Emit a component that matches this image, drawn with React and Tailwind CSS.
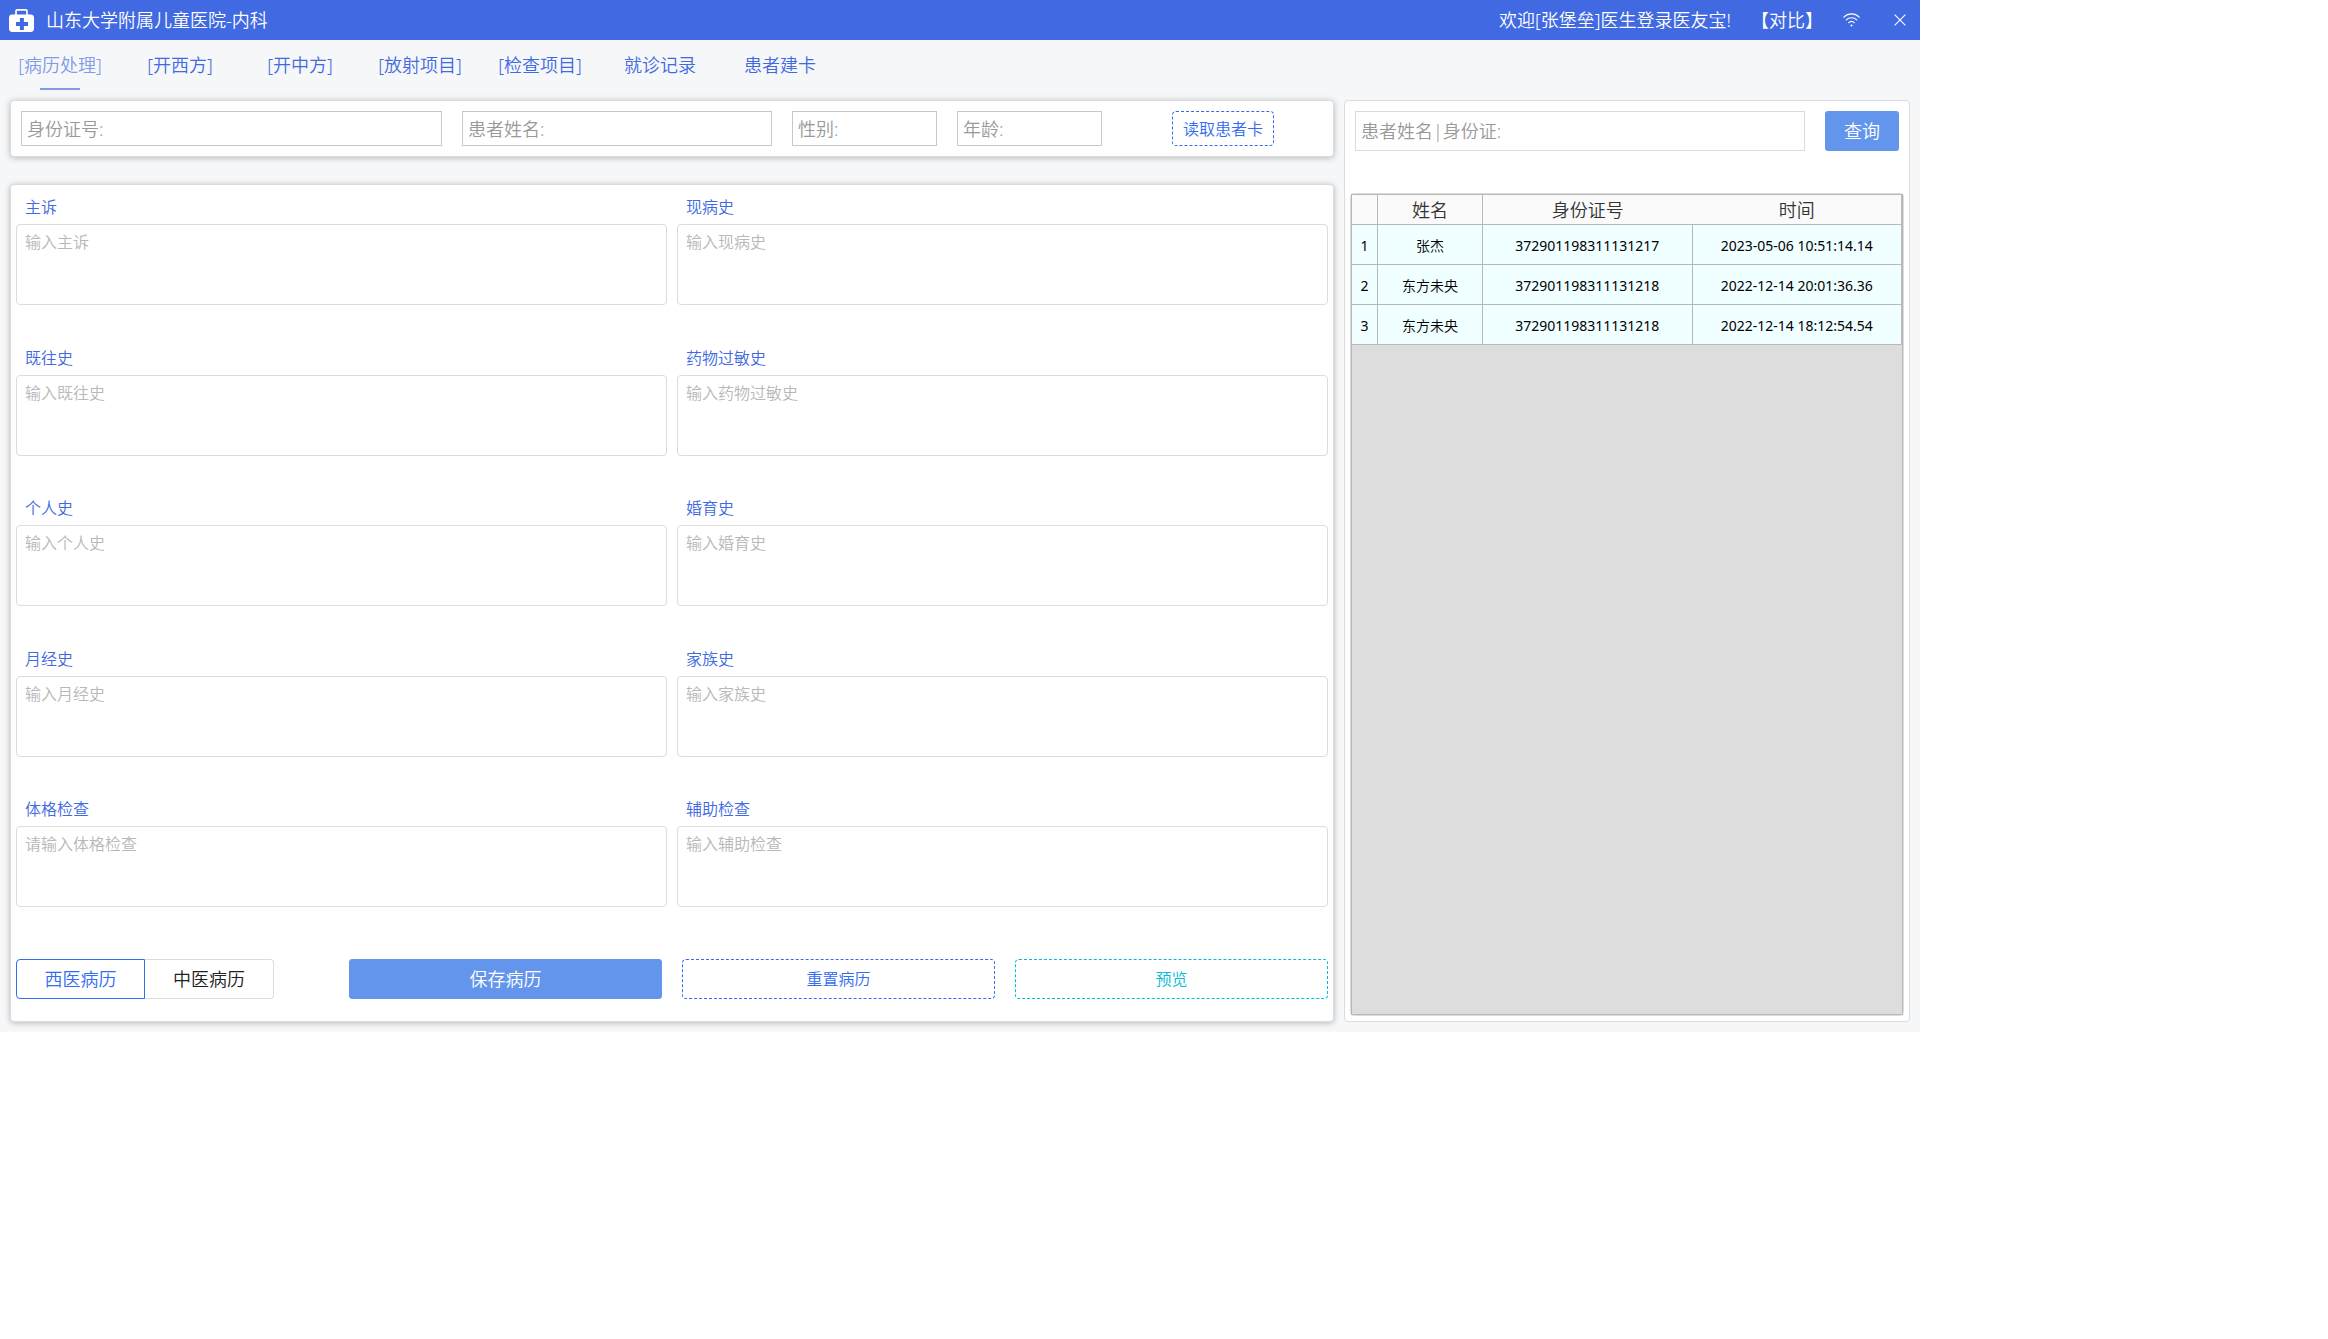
import { useState } from 'react'

const TABS = [
  '[病历处理]',
  '[开西方]',
  '[开中方]',
  '[放射项目]',
  '[检查项目]',
  '就诊记录',
  '患者建卡',
]

const RECORD_FIELDS = [
  { id: 'complaint', label: '主诉', hint: '输入主诉' },
  { id: 'present', label: '现病史', hint: '输入现病史' },
  { id: 'past', label: '既往史', hint: '输入既往史' },
  { id: 'allergy', label: '药物过敏史', hint: '输入药物过敏史' },
  { id: 'personal', label: '个人史', hint: '输入个人史' },
  { id: 'marriage', label: '婚育史', hint: '输入婚育史' },
  { id: 'menstrual', label: '月经史', hint: '输入月经史' },
  { id: 'family', label: '家族史', hint: '输入家族史' },
  { id: 'physical', label: '体格检查', hint: '请输入体格检查' },
  { id: 'auxiliary', label: '辅助检查', hint: '输入辅助检查' },
]

const PATIENTS = [
  { name: '张杰', idCard: '372901198311131217', time: '2023-05-06 10:51:14.14' },
  { name: '东方未央', idCard: '372901198311131218', time: '2022-12-14 20:01:36.36' },
  { name: '东方未央', idCard: '372901198311131218', time: '2022-12-14 18:12:54.54' },
]

function MedkitIcon() {
  return (
    <svg width="25" height="23" viewBox="0 0 25 23" fill="none">
      <path d="M7 7V2.2C7 1.3 7.6 .8 8.4 .8h8.2c.8 0 1.4.5 1.4 1.4V7" stroke="white" strokeWidth="1.7" />
      <rect x="0" y="5.6" width="25" height="17.4" rx="3.4" fill="white" />
      <path d="M12.9 9v12M7 15h12" stroke="#4169e1" strokeWidth="4" />
    </svg>
  )
}

function WifiIcon() {
  return (
    <svg width="17" height="14" viewBox="0 0 17 14" fill="none" stroke="white" strokeWidth="1.2" strokeLinecap="round">
      <path d="M.8 4.2C5.2-.2 11.8-.2 16.2 4.2" />
      <path d="M3.2 6.9c3-2.9 7.6-2.9 10.6 0" />
      <path d="M5.7 9.6c1.6-1.5 4-1.5 5.6 0" />
      <circle cx="8.5" cy="12.6" r="1" fill="white" stroke="none" />
    </svg>
  )
}

function CloseIcon() {
  return (
    <svg width="12" height="12" viewBox="0 0 12 12" fill="none" stroke="white" strokeWidth="1.1">
      <path d="M.6 .6l10.8 10.8M11.4 .6L.6 11.4" />
    </svg>
  )
}

function TitleBar() {
  return (
    <header className="flex h-10 items-center bg-[#4169e1] pl-[9px] text-lg text-white">
      <MedkitIcon />
      <h1 className="ml-3 font-[350]">山东大学附属儿童医院-内科</h1>
      <span className="ml-auto">欢迎[张堡垒]医生登录医友宝!</span>
      <button type="button" className="ml-5">【对比】</button>
      <span className="ml-5" role="img" aria-label="网络">
        <WifiIcon />
      </span>
      <button type="button" aria-label="关闭" className="ml-5 flex h-10 w-10 items-center justify-center">
        <CloseIcon />
      </button>
    </header>
  )
}

function TabBar() {
  const [active, setActive] = useState(0)

  return (
    <nav className="flex h-[60px] text-lg">
      {TABS.map((tab, i) => (
        <button
          key={tab}
          type="button"
          onClick={() => setActive(i)}
          className={`flex h-[50px] w-[120px] flex-col items-center justify-between pt-[11px] ${i === active ? 'text-[#819ae8]' : 'text-[#4169e1]'}`}
        >
          {tab}
          <span className={`h-0.5 w-10 ${i === active ? 'bg-[#819ae8]' : ''}`} />
        </button>
      ))}
    </nav>
  )
}

function PatientField({ label }) {
  return (
    <input
      type="text"
      aria-label={label}
      placeholder={label}
      className="h-[35px] w-full min-w-0 border border-[#c8c8c8] bg-white px-[5px] placeholder:text-[#999999]"
    />
  )
}

function PatientBar() {
  return (
    <form className="grid grid-cols-[421fr_310fr_145fr_145fr_172fr] gap-5 rounded border border-[#dcdcdc] bg-white py-2.5 pr-[39px] pl-2.5 text-lg shadow-[0_1px_6px_rgba(0,0,0,0.25)]">
      <PatientField label="身份证号:" />
      <PatientField label="患者姓名:" />
      <PatientField label="性别:" />
      <PatientField label="年龄:" />
      <button
        type="button"
        className="ml-[50px] h-[35px] w-[102px] rounded border border-dashed border-[#326cf3] text-base text-[#326cf3]"
      >
        读取患者卡
      </button>
    </form>
  )
}

function RecordForm() {
  const [kind, setKind] = useState('west')

  return (
    <form className="flex flex-1 flex-col rounded border border-[#dcdcdc] bg-white px-[5px] pb-[22px] shadow-[0_1px_6px_rgba(0,0,0,0.25)]">
      <div className="grid flex-1 grid-cols-2 grid-rows-5 gap-x-2.5">
        {RECORD_FIELDS.map(({ id, label, hint }) => (
          <div key={id} className="flex flex-col">
            <label htmlFor={id} className="h-[39px] pt-2.5 pl-[9px] text-base text-[#4169e1]">
              {label}
            </label>
            <textarea
              id={id}
              placeholder={hint}
              className="h-[81px] resize-none rounded border border-[#dcdcdc] px-2 py-[5px] text-base placeholder:text-[#b8b8b8]"
            />
          </div>
        ))}
      </div>

      <div className="mt-[21px] flex h-10 gap-5 text-lg">
        <div className="mr-[55px] flex w-[258px]">
          <label
            className={`flex w-1/2 items-center justify-center rounded-l border ${kind === 'west' ? 'border-[#326cf3] text-[#326cf3]' : 'border-r-0 border-[#dcdcdc] text-[#212121]'}`}
          >
            <input type="radio" name="kind" className="sr-only" checked={kind === 'west'} onChange={() => setKind('west')} />
            西医病历
          </label>
          <label
            className={`flex w-1/2 items-center justify-center rounded-r border ${kind === 'tcm' ? 'border-[#326cf3] text-[#326cf3]' : 'border-l-0 border-[#dcdcdc] text-[#212121]'}`}
          >
            <input type="radio" name="kind" className="sr-only" checked={kind === 'tcm'} onChange={() => setKind('tcm')} />
            中医病历
          </label>
        </div>
        <button type="button" className="flex-1 rounded-[3px] border border-[#6495ed] bg-[#6495ed] text-white">
          保存病历
        </button>
        <button type="reset" className="flex-1 rounded border border-dashed border-[#326cf3] text-base text-[#326cf3]">
          重置病历
        </button>
        <button type="button" className="flex-1 rounded border border-dashed border-[#00bcd4] text-base text-[#00bcd4]">
          预览
        </button>
      </div>
    </form>
  )
}

function PatientTable() {
  return (
    <div className="flex flex-1 flex-col rounded border border-[#dcdcdc]">
      <div className="flex-1 border border-[#b8b8b8] bg-[#dddddd]">
        <table className="w-full table-fixed border-separate border-spacing-0 text-center">
          <colgroup>
            <col className="w-[26px]" />
            <col className="w-[105px]" />
            <col />
            <col />
          </colgroup>
          <thead className="bg-[#fafafa] text-lg text-[#333333]">
            <tr className="h-[30px]">
              <td className="border-r border-b border-[#b8b8b8]" />
              <th className="border-r border-b border-[#b8b8b8] p-0 leading-6 font-[350]">姓名</th>
              <th className="border-b border-[#b8b8b8] p-0 leading-6 font-[350]">身份证号</th>
              <th className="border-r border-b border-[#b8b8b8] p-0 leading-6 font-[350]">时间</th>
            </tr>
          </thead>
          <tbody className="bg-[#f0ffff] text-sm font-normal text-black">
            {PATIENTS.map((p, i) => (
              <tr key={p.time} className="h-10">
                <td className="border-r border-b border-[#b8b8b8] p-0 pt-0.5">{i + 1}</td>
                <td className="border-r border-b border-[#b8b8b8] p-0 pt-0.5 font-[350]">{p.name}</td>
                <td className="border-r border-b border-[#b8b8b8] p-0 pt-0.5">{p.idCard}</td>
                <td className="border-r border-b border-[#b8b8b8] p-0 pt-0.5">{p.time}</td>
              </tr>
            ))}
          </tbody>
        </table>
      </div>
    </div>
  )
}

function PatientPanel() {
  return (
    <aside className="flex flex-col rounded border border-[#dcdcdc] bg-white p-[5px]">
      <form className="mt-[5px] mb-[42px] flex h-10 gap-5 px-[5px] text-lg">
        <input
          type="search"
          aria-label="患者姓名|身份证:"
          placeholder="患者姓名|身份证:"
          className="min-w-0 flex-1 border border-[#dcdcdc] px-[5px] placeholder:text-[#999999]"
        />
        <button type="button" className="w-[74px] rounded-[3px] bg-[#6495ed] text-white">
          查询
        </button>
      </form>
      <PatientTable />
    </aside>
  )
}

export default function App() {
  return (
    <div className="flex min-h-[1032px] w-full max-w-[1920px] flex-col bg-[#f5f7f9] font-['Noto_Sans','Noto_Sans_CJK_SC',sans-serif] font-[350]">
      <TitleBar />
      <TabBar />
      <main className="grid flex-1 grid-cols-[1324fr_566fr] gap-2.5 px-2.5 pb-2.5">
        <div className="flex flex-col gap-[27px]">
          <PatientBar />
          <RecordForm />
        </div>
        <PatientPanel />
      </main>
    </div>
  )
}
